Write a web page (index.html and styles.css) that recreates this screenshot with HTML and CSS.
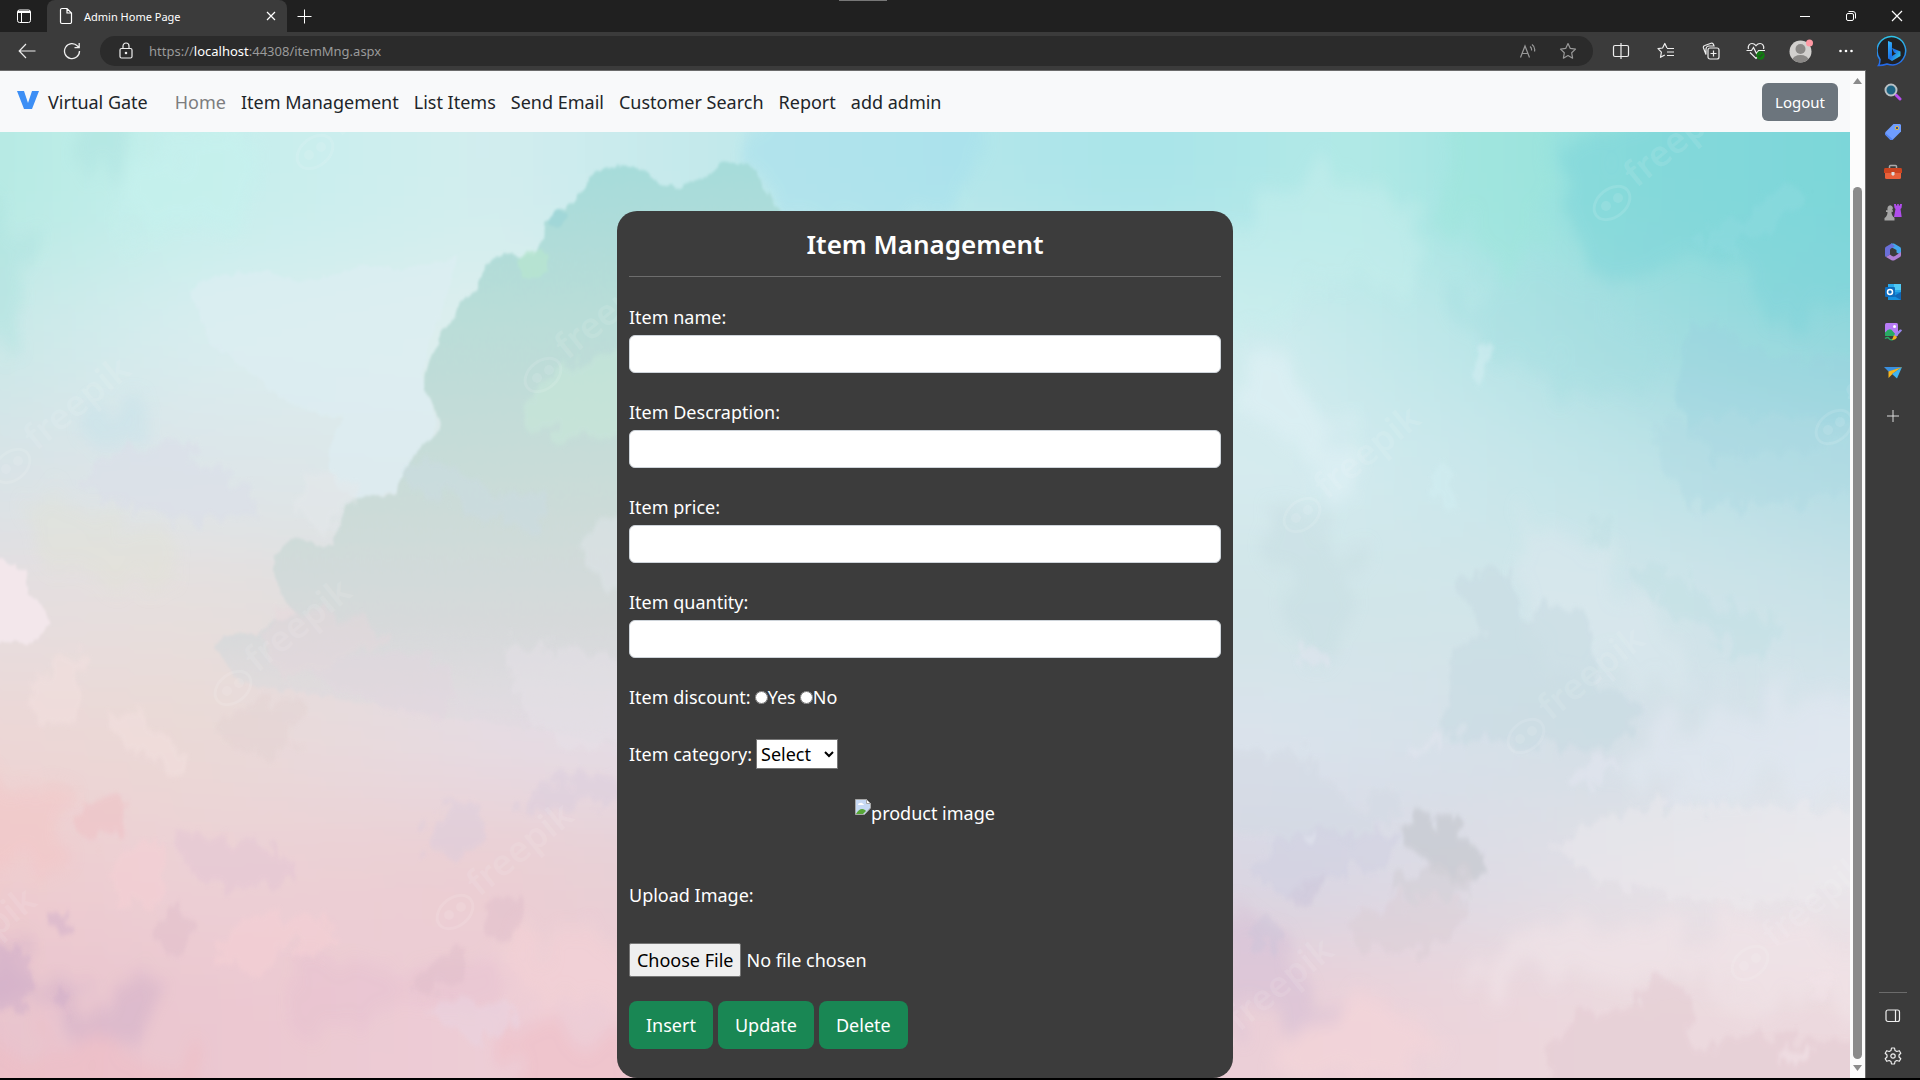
FILE: index.html
```html
<!DOCTYPE html>
<html lang="en">
<head>
<meta charset="utf-8">
<title>Admin Home Page</title>
<link rel="stylesheet" href="styles.css">
</head>
<body>
<div class="window">
  <header class="titlebar">
    <button class="icon-btn tab-actions" aria-label="Tab actions">
      <svg width="16" height="16" viewBox="0 0 16 16" fill="none" stroke="#fff"><rect x="1.500" y="2" width="13" height="12.500" rx="2"/><path d="M2 3.500h12M2 4.500h12M5.500 5v9"/></svg>
    </button>
    <div class="tab">
      <svg width="14" height="18" viewBox="0 0 14 18" fill="none" stroke="#fff" stroke-width="1.200"><path d="M3 1.500h5l4.500 4.500v9a1.500 1.500 0 0 1-1.500 1.500H3A1.500 1.500 0 0 1 1.500 15V3A1.500 1.500 0 0 1 3 1.500zM8 1.500V6h4.500"/></svg>
      <span class="tab-title">Admin Home Page</span>
      <button class="icon-btn" aria-label="Close tab"><svg width="10" height="10" viewBox="0 0 10 10" stroke="#fff" stroke-width="1.200"><path d="M1 1l8 8M9 1L1 9"/></svg></button>
    </div>
    <button class="icon-btn new-tab" aria-label="New tab"><svg width="15" height="15" viewBox="0 0 15 15" stroke="#fff"><path d="M7.500 0.500v14M0.500 7.500h14"/></svg></button>
    <span class="grip"></span>
    <div class="win-controls">
      <button class="icon-btn" aria-label="Minimize"><svg width="12" height="12" viewBox="0 0 12 12" stroke="#fff"><path d="M1 6.500h10"/></svg></button>
      <button class="icon-btn" aria-label="Restore"><svg width="12" height="12" viewBox="0 0 12 12" fill="none" stroke="#fff"><rect x="1.500" y="3.500" width="7" height="7" rx="1.500"/><path d="M3.500 1.500H8A2.500 2.500 0 0 1 10.500 4v4.500"/></svg></button>
      <button class="icon-btn" aria-label="Close"><svg width="12" height="12" viewBox="0 0 12 12" stroke="#fff" stroke-width="1.200"><path d="M1 1l10 10M11 1L1 11"/></svg></button>
    </div>
  </header>

  <div class="toolbar">
    <button class="icon-btn back" aria-label="Back"><svg width="18" height="16" viewBox="0 0 18 16" fill="none" stroke="#eee" stroke-width="1.200"><path d="M17.500 8H1.500M8 1L1.200 8 8 15"/></svg></button>
    <button class="icon-btn reload" aria-label="Refresh"><svg width="18" height="18" viewBox="0 0 18 18" fill="none" stroke="#eee" stroke-width="1.300"><path d="M16.500 9A7.500 7.500 0 1 1 14.500 4L16 5.500M16.200 1v4.700h-4.700"/></svg></button>
    <div class="address">
      <svg width="14" height="18" viewBox="0 0 14 18" fill="none" stroke="#eee" stroke-width="1.200"><rect x="1" y="6.500" width="12" height="9.500" rx="1.500"/><path d="M4 6.500V4a3 3 0 0 1 6 0v2.500"/><circle cx="7" cy="11" r=".7" fill="#eee"/></svg>
      <span class="url">https://<b>localhost</b>:44308/itemMng.aspx</span>
      <button class="icon-btn" aria-label="Read aloud"><svg width="18" height="16" viewBox="0 0 18 16" fill="none" stroke="#999" stroke-width="1.200"><path d="M1.500 14.500L6 3l4.500 11.500M3 10.500h6M11 3.500q2 1.500 1.500 4M13 1.500q3.500 2.500 2.500 7"/></svg></button>
      <button class="icon-btn" aria-label="Add to favorites"><svg width="18" height="18" viewBox="0 0 18 18" fill="none" stroke="#999" stroke-width="1.200" stroke-linejoin="round"><path d="M9 1.500l2.300 4.900 5.200.700-3.800 3.700.900 5.400L9 13.600l-4.600 2.600.900-5.400L1.500 7.100l5.200-.700z"/></svg></button>
    </div>
    <div class="tools">
      <button class="icon-btn" aria-label="Split screen"><svg width="18" height="16" viewBox="0 0 18 16" fill="none" stroke="#eee" stroke-width="1.200"><path d="M7 2.500H3A1.500 1.500 0 0 0 1.500 4v8A1.500 1.500 0 0 0 3 13.500h6M9 2.500h6A1.500 1.500 0 0 1 16.500 4v8a1.500 1.500 0 0 1-1.500 1.500H9M7 2.500h2M9 0v16"/></svg></button>
      <button class="icon-btn" aria-label="Favorites"><svg width="18" height="18" viewBox="0 0 18 18" fill="none" stroke="#eee" stroke-width="1.200" stroke-linejoin="round"><path d="M10 6L7.800 1.500 5.600 6 1 6.700l3.400 3.400-.900 5.200L7.800 13M10 6.500h7M10 10h7M10 13.500h7"/></svg></button>
      <button class="icon-btn" aria-label="Collections"><svg width="18" height="18" viewBox="0 0 18 18" fill="none" stroke="#eee" stroke-width="1.200"><rect x="6" y="6" width="11" height="11" rx="2"/><path d="M11.500 8.500v6M8.500 11.500h6M4 12.500L1.500 6A2 2 0 0 1 2.800 3.500L9 1.300a2 2 0 0 1 2.500 1.200l.500 1.500H7A3 3 0 0 0 4 7z"/></svg></button>
      <button class="icon-btn" aria-label="Browser essentials"><svg width="20" height="20" viewBox="0 0 20 20" fill="none" stroke="#eee" stroke-width="1.200"><path d="M2.500 8C1.500 5 3.500 2.500 6 2.500c2 0 3 1 4 2.200 1-1.200 2-2.200 4-2.200 2.500 0 4.500 2.500 3.500 5.500M4 11.500l6 6 2-2M0.500 9.500h5l2-3 3 6 2-3H19"/><circle cx="14.500" cy="14.500" r="4.200" fill="#107c10" stroke="none"/><path d="M12.500 14.500l1.500 1.500 2.700-3" stroke="#2b4a2b"/></svg></button>
      <button class="icon-btn" aria-label="Profile"><svg width="24" height="24" viewBox="0 0 24 24"><clipPath id="face"><circle cx="11.500" cy="12.500" r="11"/></clipPath><circle cx="11.500" cy="12.500" r="11" fill="#d2d0ce"/><g fill="#8a8886" clip-path="url(#face)"><circle cx="11.500" cy="10" r="5"/><ellipse cx="11.500" cy="21" rx="8" ry="5"/></g><circle cx="20.500" cy="4" r="3.500" fill="#ff99a4"/></svg></button>
      <button class="icon-btn" aria-label="Settings and more"><svg width="16" height="4" viewBox="0 0 16 4" fill="#fff"><circle cx="2.500" cy="2" r="1.300"/><circle cx="8" cy="2" r="1.300"/><circle cx="13.500" cy="2" r="1.300"/></svg></button>
      <button class="icon-btn chat" aria-label="Bing Chat"><svg width="32" height="32" viewBox="0 0 32 32"><defs><linearGradient id="ring" x2="0" y2="1"><stop stop-color="#2fc3e8"/><stop offset="1" stop-color="#2467e8"/></linearGradient><linearGradient id="bing" x2="1" y2="1"><stop stop-color="#37bdff"/><stop offset=".5" stop-color="#1a6fe8"/><stop offset="1" stop-color="#3ee0e0"/></linearGradient></defs><path d="M1.500 30.500q1.500-2 1.500-6A14.300 14.300 0 1 1 16 30q-3 0-6-1-4 1.500-8.500 1.500z" fill="#202124" stroke="url(#ring)" stroke-width="1.500"/><path d="M11 6l4 1.500v13.500l4-2.500-2-1-2-4.500 8.500 3.500v4.500L15 26l-4-2.500z" fill="url(#bing)"/></svg></button>
    </div>
  </div>

  <div class="content">
    <div class="page">
      <nav class="navbar">
        <a class="brand" href="#"><svg width="22" height="20" viewBox="0 0 22 20" fill="#3d8ff5"><path d="M0 1h7l4 12 4-12h7l-7 18H7z"/></svg>Virtual Gate</a>
        <a class="muted" href="#">Home</a>
        <a href="#">Item Management</a>
        <a href="#">List Items</a>
        <a href="#">Send Email</a>
        <a href="#">Customer Search</a>
        <a href="#">Report</a>
        <a href="#">add admin</a>
        <button class="logout">Logout</button>
      </nav>

      <main class="stage">
        <svg class="sky" viewBox="0 0 1850 946" preserveAspectRatio="none" aria-hidden="true">
          <defs>
            <filter id="wash" x="-20%" y="-20%" width="140%" height="140%"><feGaussianBlur stdDeviation="30 48"/></filter>
            <filter id="soft" x="-10%" y="-10%" width="120%" height="120%">
              <feTurbulence type="fractalNoise" baseFrequency=".022 .026" numOctaves="3" seed="4" result="n"/>
              <feDisplacementMap in="SourceGraphic" in2="n" scale="70" xChannelSelector="R" yChannelSelector="G"/>
              <feGaussianBlur stdDeviation="4"/>
            </filter>
            <filter id="puffy" x="-10%" y="-10%" width="120%" height="120%">
              <feTurbulence type="fractalNoise" baseFrequency=".05" numOctaves="2" seed="2" result="n"/>
              <feDisplacementMap in="SourceGraphic" in2="n" scale="16" xChannelSelector="R" yChannelSelector="G"/>
              <feGaussianBlur stdDeviation="3"/>
            </filter>
            <filter id="softer" x="-30%" y="-30%" width="160%" height="160%">
              <feTurbulence type="fractalNoise" baseFrequency=".010 .014" numOctaves="3" seed="7" result="n"/>
              <feDisplacementMap in="SourceGraphic" in2="n" scale="160" xChannelSelector="R" yChannelSelector="G"/>
              <feGaussianBlur stdDeviation="14"/>
            </filter>
            <linearGradient id="r0"><stop offset=".02" stop-color="#aee7df"/><stop offset=".16" stop-color="#c5efec"/><stop offset=".3" stop-color="#d2edef"/><stop offset=".42" stop-color="#c0e8ea"/><stop offset=".6" stop-color="#a9e4e9"/><stop offset=".7" stop-color="#b2e9e6"/><stop offset=".82" stop-color="#90dfdc"/><stop offset="1" stop-color="#74d5d8"/></linearGradient>
            <linearGradient id="r1"><stop offset="0" stop-color="#c0e5e3"/><stop offset=".16" stop-color="#d8edef"/><stop offset=".3" stop-color="#deefee"/><stop offset=".65" stop-color="#d0ecee"/><stop offset=".75" stop-color="#bbe6e8"/><stop offset=".85" stop-color="#9edbdf"/><stop offset="1" stop-color="#84d3da"/></linearGradient>
            <linearGradient id="r2"><stop offset="0" stop-color="#d5e1e5"/><stop offset=".16" stop-color="#dde5e9"/><stop offset=".3" stop-color="#dce8e9"/><stop offset=".67" stop-color="#d5ebef"/><stop offset=".82" stop-color="#c1e4e8"/><stop offset="1" stop-color="#a9d8e1"/></linearGradient>
            <linearGradient id="r3"><stop offset="0" stop-color="#e5dde1"/><stop offset=".16" stop-color="#e6dfdd"/><stop offset=".3" stop-color="#dcdde0"/><stop offset=".67" stop-color="#d0e5e8"/><stop offset=".82" stop-color="#d2e5ea"/><stop offset="1" stop-color="#c3dfe5"/></linearGradient>
            <linearGradient id="r4"><stop offset="0" stop-color="#eed5d5"/><stop offset=".16" stop-color="#ead9d6"/><stop offset=".3" stop-color="#e6dbe3"/><stop offset=".67" stop-color="#dae3ec"/><stop offset=".82" stop-color="#d3dfe6"/><stop offset="1" stop-color="#dfe7f0"/></linearGradient>
            <linearGradient id="r5"><stop offset="0" stop-color="#f0c9ca"/><stop offset=".16" stop-color="#ecd0d5"/><stop offset=".3" stop-color="#ebced2"/><stop offset=".67" stop-color="#d7d6e3"/><stop offset=".82" stop-color="#e2e0e6"/><stop offset="1" stop-color="#eeebee"/></linearGradient>
            <linearGradient id="r6"><stop offset="0" stop-color="#e6c2cd"/><stop offset=".16" stop-color="#ebc7d0"/><stop offset=".3" stop-color="#edcdd6"/><stop offset=".67" stop-color="#ebcfd7"/><stop offset=".82" stop-color="#ecd9de"/><stop offset="1" stop-color="#ebd8dd"/></linearGradient>
            <linearGradient id="cloud" x1="0" y1="0" x2="0" y2="1"><stop stop-color="#a6dcda"/><stop offset=".25" stop-color="#b9ddd8"/><stop offset=".5" stop-color="#c8dcd8"/><stop offset=".75" stop-color="#d6d9da"/><stop offset="1" stop-color="#dfdbe1" stop-opacity="0"/></linearGradient>
            <g id="mark" fill="#fff" fill-opacity=".1">
              <ellipse rx="20" ry="14" transform="rotate(-39)" fill="none" stroke="#fff" stroke-opacity=".11" stroke-width="3"/>
              <circle cx="-6" cy="3" r="5"/><circle cx="6" cy="-5" r="5"/>
              <text class="mark-text" x="28" y="4" transform="rotate(-39)">freepik</text>
            </g>
          </defs>
          <g filter="url(#wash)">
            <path fill="url(#r0)" d="M-150-200h2150v338h-2150z"/>
            <path fill="url(#r1)" d="M-150 135h2150v137h-2150z"/>
            <path fill="url(#r2)" d="M-150 270h2150v137h-2150z"/>
            <path fill="url(#r3)" d="M-150 405h2150v137h-2150z"/>
            <path fill="url(#r4)" d="M-150 540h2150v137h-2150z"/>
            <path fill="url(#r5)" d="M-150 675h2150v137h-2150z"/>
            <path fill="url(#r6)" d="M-150 810h2150v337h-2150z"/>
          </g>
          <g transform="translate(0 -2) scale(.408 .606)">
            <g filter="url(#softer)" opacity=".8">
              <path fill="#aee3e0" fill-opacity=".6" d="M-100 100q190 30 180 110t-10 140h-170zM200-50h130q-20 130-70 135t-60-40z"/>
              <path fill="#c5f1ee" fill-opacity=".8" d="M330 40q130-40 280-20 60 60-20 110-120 10-200 60t-90-70z"/>
              <path fill="#c7e3ea" fill-opacity=".7" d="M180 480q80-40 180 0 0 60-150 35z"/>
              <path fill="#e1e3d4" fill-opacity=".5" d="M60 580q100 30 200 50t180 80q40 60-100 50t-220-20z"/>
              <path fill="#f3c4c4" fill-opacity=".6" d="M-100 1060q220 10 260 70t-40 90-220-20z"/>
              <path fill="#c9a9c7" fill-opacity=".5" d="M-100 1340q180 10 210 60t190 10 60 60-180 20-280-30z"/>
              <path fill="#e2b7cc" fill-opacity=".3" d="M700 1430q60-80 300-60t260 50-200 40-360 10z"/>
              <path fill="#f1b9bf" fill-opacity=".5" d="M1250 1490q80-60 130 0t180-40v220h-300zM-100 1500q300 20 600 30v140h-600z"/>
              <path fill="#f5d2d6" fill-opacity=".7" d="M1180 1370q180-50 390-20v90q-200 30-390-70z"/>
              <path fill="#a3dfee" fill-opacity=".6" d="M1900-60h500q20 140-80 190t-330 20-90-210z"/>
            </g>
            <g filter="url(#puffy)">
              <path fill="#ddeef3" fill-opacity=".6" d="M465 270c50-40 130-30 195-37 90 30 160 5 225-12 80 15 150 5 235-10-20 70-60 110-85 190 10 60 50 70 30 100s-60 50-95 95c-50 12-80 8-110 8-60-20-80-70-15-130-60 0-150-20-205-60-60-30-90-50-130-60-10-45-30-65-45-84z"/>
              <path fill="url(#cloud)" d="M2000 300L1912 134c-30-30-48-45-57-66-25-16-75-18-95-8-20 25-60 20-106 39-34-14-54-14-64-27-20-12-80-17-110-7-20 5-30 10-40 20-15 20-25 30-45 38-20 10-60 15-60 37 5 20-15 25-27 45-30 5-50 10-73-5-40 10-38 30-57 45-8 24-20 20-43 35-20 10-15 28-28 38-20 8-30 15-30 32-35 30-45 60-32 90 25 20 50 46 25 65-30 10-50 20-70 50-15 20-30 30-30 45-30 10-70 0-100 5-40 18-35 75-68 85-30-2-52-25-95-10-45 20-45 50-12 90 10 20 30 27 40 27-40 10-92 15-100 36-30-4-80-8-110 20l60 60 1400 150z"/>
              <path fill="#b6e5cf" fill-opacity=".8" d="M1270 215q40-30 75-10l-5 30q-40 20-60 10z"/>
              <path fill="#95d2d8" fill-opacity=".5" d="M1340 150q20-25 50-15 0 20-25 28z"/>
              <path fill="#f3e7eb" d="M-40 700l100 25q10 15 5 40 40 15 57 45-20 30-45 40-35-15-117 12z"/>
            </g>
            <g filter="url(#soft)" opacity=".7">
              <path fill="#c9ecdb" fill-opacity=".6" d="M1310 430q60-60 360-70v150q-250 0-340-10t-20-70z"/>
              <path fill="#cbdce3" fill-opacity=".7" d="M980 580q50-60 100-40t110 50 140 0q20 50-10 70-90-10-150-30t-190-50z"/>
              <path fill="#e0e6ea" fill-opacity=".7" d="M1668 600q-190 20-250 90 40 70 250 100z"/>
              <path fill="#dadfe9" fill-opacity=".9" d="M200 575q180-100 300-30 100 30 130 80-100 40-230 15-150-30-200-65z"/>
              <path fill="#e5e8eb" fill-opacity=".8" d="M705 615q60-60 120-55l60 40q-60 20-70 65-50 0-110-50z"/>
              <path fill="#f2e0df" fill-opacity=".8" d="M60 955q20-30 45-60 40-40 115-32-20 25-20 60t-10 55q-50 10-130-23zM255 965q70-10 120 20 70 30 95 50-10 20-45 18-100-20-170-88z"/>
              <path fill="#e8d7dc" fill-opacity=".6" d="M640 830q60-50 110-40 160 10 210 60-130 20-230 60-60-10-90-80z"/>
              <path fill="#e3d5e0" fill-opacity=".6" d="M740 900q150-50 360-20 40 50-10 90-180-10-350-70zM1000 890q60-20 110 0-10 50-60 60-60-20-50-60z"/>
              <path fill="#e8e2ea" fill-opacity=".6" d="M1250 850q120-10 362 40v90q-130 40-160 45-120-20-180-70-10-60-22-105z"/>
              <path fill="#e2d0d0" fill-opacity=".5" d="M530 995q20-50 220-60-30 80-60 100-100-5-160-40z"/>
              <path fill="#d9cbdd" fill-opacity=".6" d="M1270 1110q80-60 280-35l-10 20q-170 35-270 35zM1040 1170q30-60 100-60t40 70q-60 30-140 10z"/>
              <path fill="#f0bfc3" fill-opacity=".7" d="M165 1130q60-40 150-20-10 50-70 70-60-20-80-50z"/>
              <path fill="#dfc0d3" fill-opacity=".5" d="M470 1215q40-50 135-30-10 40-70 45zM420 1160q150-10 250 30 80 20 40 50-120 30-240-10z"/>
              <path fill="#f5cfd5" fill-opacity=".8" d="M260 1240q40-80 150-60-20 60-30 110-60-10-120-50zM530 1360q20-60 80-65t150 5 70 35-90 10-80 30-130-15z"/>
              <path fill="#dfbecb" fill-opacity=".7" d="M1190 1300q20-40 60-40t30 45-60 25zM1010 1420q60-60 110-65t10 40-120 25zM380 1350q10-70 60-65t25 50-50 25z"/>
              <path fill="#d0aecb" fill-opacity=".7" d="M120 1435q20-15 55-5-5 25-30 23zM110 1300q30-15 65 0-20 25-50 22zM-60 1340q120-10 145 35-5 50-40 80-30 0-105-20z"/>
              <path fill="#ead3e0" fill-opacity=".8" d="M1030 1450q60-20 220-10l25 25q-30 40-130 30z"/>
            </g>
          </g>
          <g transform="translate(1220 -2) scale(.408 .606)">
            <g filter="url(#softer)" opacity=".75">
              <path fill="#9ee5db" fill-opacity=".7" d="M540-80h350q-90 120-100 210t-60 110-90-40-100-60z"/>
              <path fill="#c6eeec" fill-opacity=".7" d="M0 180q180-120 320-100t180 90-120 80-370 90z"/>
              <path fill="#79d3d9" fill-opacity=".6" d="M860 60q200-160 790-150v400q-300 0-350-60t-250-10-190-180z"/>
              <path fill="#a3dee0" fill-opacity=".5" d="M560 300q200-100 350-40t170 120-100 60-300-60z"/>
              <path fill="#dff1f5" fill-opacity=".9" d="M40 390q80-40 150 30t130 110 10 75-120-60-170-70z"/>
              <path fill="#c9dfe4" fill-opacity=".8" d="M110 620q100-30 180 60t10 160-130-20-60-200z"/>
              <path fill="#dce8ee" fill-opacity=".7" d="M700 640q150 20 300 110t200 130-200 30-250-130-50-140z"/>
              <path fill="#e2e8f1" fill-opacity=".8" d="M900 1050q200-60 360-90t390-50v170q-400 20-750-30z"/>
              <path fill="#f1e5e9" fill-opacity=".8" d="M620 1380q150-60 400-70t620 30v80q-300 40-500-10t-500 40z"/>
              <path fill="#f4d5d9" fill-opacity=".9" d="M160 1480q100-60 250-30t130 70-160 40-240 20z"/>
              <path fill="#d4bed6" fill-opacity=".7" d="M30 1300q90-10 150 60t90 90-120 20-130-20z"/>
            </g>
            <g filter="url(#soft)" opacity=".65">
              <path fill="#c6dae1" fill-opacity=".8" d="M580 740q70-20 130-15 20 60 50 90 60-50 130-20 40 60 20 110 80 20 130 50-40 60-110 70-200-10-380-30 10-80 20-130 40-30 90-35-70-30-80-90z"/>
              <path fill="#d1d8e3" fill-opacity=".7" d="M-40 1040q200-40 290 10 50 60 100 80 60-60 80-10-30 40-80 50-120 10-400-20z"/>
              <path fill="#c4c7ce" d="M440 1150q60-30 130-5 80 40 85 85-70 20-150-15-50-40-65-65z"/>
              <path fill="#cfcad0" fill-opacity=".7" d="M410 1265q60-60 180-50 50 20 20 45-80 20-200 5z"/>
              <path fill="#d0cfe1" fill-opacity=".8" d="M75 1220q60-60 140-65t240 20q-40 50-180 50-20 40-100 40-60-10-100-45z"/>
              <path fill="#ccc4d8" fill-opacity=".7" d="M160 1265q30-30 85-25-10 40-50 48zM60 1320q40-25 95-5-5 40-50 45-40-10-45-40z"/>
              <path fill="#dacdd4" fill-opacity=".7" d="M310 1310q80-50 280-40 30 20-20 50-120 60-220 30z"/>
              <path fill="#e2e6f0" fill-opacity=".9" d="M185 860q50-20 90 15-20 15-50 10zM460 1035q40-35 85-35-20 30-85 35zM850 1065q60-40 130-20-50 30-110 45-25 5-20-25zM200 1165q30-10 45 5-15 20-30 15z"/>
              <path fill="#d0edf1" d="M615 390q10-30 38-25 5 40-25 60-25-10-13-35zM520 570q30-20 50 0-5 30 5 50-30 10-55-50z"/>
              <path fill="#8edce0" fill-opacity=".7" d="M1170 195q60-60 130-50 60-80 150-50-60 60-160 90-60 20-120 10z"/>
              <path fill="#9bd2df" fill-opacity=".6" d="M1130 370q20-60 100-50 80 80 430 50v110q-270 70-440 60-120-60-90-170z"/>
              <path fill="#add9e3" fill-opacity=".6" d="M1070 500q60-40 590-20v100q-320 60-520 30-60-40-70-110z"/>
              <path fill="#c1dfe4" fill-opacity=".7" d="M900 660q50-30 65 0 0 40-50 35zM1000 720q120 0 200 50 100 40 180 40-30 60-100 60-80-40-160-70t-120-80z"/>
              <path fill="#f0edf0" fill-opacity=".6" d="M820 1180q100-50 240-60 250-20 600 20v110q-420 50-620 0-120 0-220-70z"/>
              <path fill="#e3c9d0" fill-opacity=".7" d="M1010 1440q40-40 130-30 20 60 10 90 80 20 140-10l370 20v160H800v-150q60-70 210-80z"/>
              <path fill="#f2e4e9" fill-opacity=".8" d="M1440 1410q30-30 65-5-10 25-40 23zM1370 1530q30-20 70-10-20 25-60 22z"/>
            </g>
          </g>
          <use href="#mark" x="12" y="334"/><use href="#mark" x="233" y="556"/><use href="#mark" x="455" y="780"/><use href="#mark" x="543" y="243"/><use href="#mark" x="315" y="20"/><use href="#mark" x="-82" y="865"/>
          <use href="#mark" x="1612" y="71"/><use href="#mark" x="1302" y="383"/><use href="#mark" x="1526" y="604"/><use href="#mark" x="1750" y="831"/><use href="#mark" x="1834" y="295"/><use href="#mark" x="1215" y="915"/>
        </svg>

        <form class="card">
          <h1>Item Management</h1>
          <div class="field"><label for="name">Item name:</label><input id="name" type="text"></div>
          <div class="field"><label for="desc">Item Descraption:</label><input id="desc" type="text"></div>
          <div class="field"><label for="price">Item price:</label><input id="price" type="text"></div>
          <div class="field"><label for="qty">Item quantity:</label><input id="qty" type="text"></div>
          <div class="row discount"><span>Item discount:</span>
            <label><input type="radio" name="discount">Yes</label>
            <label><input type="radio" name="discount">No</label>
          </div>
          <div class="row category"><label for="cat">Item category:</label>
            <select id="cat"><option>Select</option></select>
          </div>
          <div class="preview">
            <svg width="16" height="16" viewBox="0 0 16 16"><path d="M.5.500h11l4 4V9l-6 6.500h-9z" fill="#c6d9f5" stroke="#a7a7a7"/><path d="M11.500.500v4h4z" fill="#fff" stroke="#a7a7a7"/><path d="M3 6q0-2 2-2 2-1 3 1 1 0 1 1z" fill="#fff"/><path d="M1 15q4-7 9-4l1 1-3 3z" fill="#58a637"/></svg>
            <span>product image</span>
          </div>
          <label class="upload-label" for="upload">Upload Image:</label>
          <input class="upload" id="upload" type="file">
          <div class="actions">
            <button type="button">Insert</button>
            <button type="button">Update</button>
            <button type="button">Delete</button>
          </div>
        </form>
      </main>
    </div>

    <div class="scrollbar">
      <svg width="9" height="6" viewBox="0 0 9 6" fill="#8b8b8b"><path d="M0 6l4.500-6L9 6z"/></svg>
      <span class="thumb"></span>
      <svg width="9" height="6" viewBox="0 0 9 6" fill="#8b8b8b"><path d="M0 0l4.500 6L9 0z"/></svg>
    </div>

    <aside class="sidebar">
      <button class="icon-btn" aria-label="Search"><svg width="18" height="18" viewBox="0 0 18 18"><path d="M12 12l4 4" stroke="#b84df0" stroke-width="3" stroke-linecap="round"/><circle cx="7" cy="7" r="5.500" fill="#1e6483" stroke="#b9c0c4" stroke-width="2"/></svg></button>
      <button class="icon-btn" aria-label="Shopping"><svg width="18" height="18" viewBox="0 0 18 18"><path d="M9.500 1H16l1 1v6.500L9 16.500q-1.500 1-3 0L1.500 12q-1-1.500 0-3z" fill="#6f9dff"/><path d="M9 16.500q-1.500 1-3 0L1.500 12q-.7-1 0-2z" fill="#5484f0"/><circle cx="13" cy="5" r="1.700" fill="#33509c" stroke="#e8bd3b"/></svg></button>
      <button class="icon-btn" aria-label="Tools"><svg width="18" height="16" viewBox="0 0 18 16"><path d="M5.500 5V2.500q0-1 1-1h5q1 0 1 1V5" fill="none" stroke="#aaa" stroke-width="1.500"/><rect x="1" y="4" width="16" height="11" rx="1.500" fill="#e8603a"/><path d="M1 4h16q1 0 1 2v3H0V6q0-2 1-2z" fill="#cb4420"/><path d="M7.500 8h3v2.500L9 12l-1.500-1.500z" fill="#ddd"/></svg></button>
      <button class="icon-btn" aria-label="Games"><svg width="18" height="18" viewBox="0 0 18 18"><path d="M10 1h2v1.500h1.200V1h1.600v1.500H16V1h2l-.500 4-1 1 1.200 8H10l1.500-8-1-1z" fill="#b04dec"/><path d="M3.500 5a2.700 2.700 0 1 1 4.200 2.300H9v1.500H7.500q0 4 3 6V17.500H.5V15q3-2 3-6H2V7.300h1.700A3 3 0 0 1 3.500 5z" fill="#a6a6a6"/></svg></button>
      <button class="icon-btn" aria-label="Microsoft 365"><svg width="18" height="18" viewBox="0 0 18 18"><path d="M7 .5h3l6 3.500q1 .7 1 2v6l-4.500-2.500V7L7 4z" fill="#42a7ec"/><path d="M7.500.500L2 3.700Q1 4.300 1 5.500v7q0 1 1 1.500l4-2.500V7q0-1 1-1.500l4-2.300z" fill="#6a6fd8"/><path d="M2 14l5.500 3.200q1.500.8 3 0L16 14q1-.7 1-2V9l-6 4q-1.500.8-3 0l-2-1.500z" fill="#b07fd6"/></svg></button>
      <button class="icon-btn" aria-label="Outlook"><svg width="18" height="18" viewBox="0 0 18 18"><rect x="4" y="1" width="13" height="10" fill="#28a8ea"/><path d="M10 1h7v6h-7z" fill="#50c9f5"/><path d="M4 9h13v8H4z" fill="#1490df"/><path d="M17 9v8l-7-4z" fill="#1066b5"/><rect x="1" y="4" width="10" height="10" rx="1" fill="#0f6cbd"/><circle cx="6" cy="9" r="2.500" fill="none" stroke="#fff" stroke-width="1.500"/></svg></button>
      <button class="icon-btn" aria-label="Image Creator"><svg width="18" height="18" viewBox="0 0 18 18"><rect x="1" y="0" width="13" height="13" rx="1.500" fill="#b77bf6"/><circle cx="10.500" cy="3.500" r="1.500" fill="#fff"/><path d="M1 9.500q5-6 8-1l4 4.500H1z" fill="#28aa64"/><path d="M1 15.500q3-2 4 0t4 1" fill="none" stroke="#28aa64" stroke-width="1.500"/><path d="M10 12l6-5.500q1.500-.5 2 1L12 14z" fill="#9a86ee"/><path d="M8 17l2-5 3 2q-1 3-5 3z" fill="#f3b41e"/></svg></button>
      <button class="icon-btn" aria-label="Drop"><svg width="18" height="16" viewBox="0 0 18 16"><path d="M0 3h18L5 8z" fill="#3a90df"/><path d="M18 3L4.500 7.500V14L9 9.500z" fill="#f6b51e"/><path d="M18 3L8 10l5 4.500z" fill="#3fb4f1"/></svg></button>
      <button class="icon-btn customize" aria-label="Customize"><svg width="12" height="12" viewBox="0 0 12 12" stroke="#ddd"><path d="M6 0v12M0 6h12"/></svg></button>
      <hr>
      <button class="icon-btn" aria-label="Hide sidebar"><svg width="16" height="14" viewBox="0 0 16 14" fill="none" stroke="#eee" stroke-width="1.200"><rect x="1" y="1" width="13.500" height="11.500" rx="2"/><path d="M10.500 1v11.500"/></svg></button>
      <button class="icon-btn" aria-label="Settings"><svg width="18" height="18" viewBox="0 0 18 18" fill="none" stroke="#eee" stroke-width="1.200" stroke-linejoin="round"><circle cx="9" cy="9" r="2.200"/><path d="M7.500 1h3l.500 2.500 1.800 1 2.500-.800 1.500 2.600L15 8v2l1.800 1.700-1.500 2.600-2.500-.800-1.800 1-.500 2.500h-3L7 14.500l-1.800-1-2.500.800-1.500-2.600L3 10V8L1.200 6.300l1.500-2.600 2.500.800 1.800-1z"/></svg></button>
    </aside>
  </div>
</div>
</body>
</html>
```
FILE: styles.css
```css
* { box-sizing: border-box; }

body {
  margin: 0;
  background: #000;
  font-family: "Noto Sans", "Open Sans", sans-serif;
  font-size: 18px;
  color: #212529;
}

button, input, select { font: inherit; }

.window {
  display: flex;
  flex-direction: column;
  height: 100vh;
  padding-bottom: 2px;
  overflow: hidden;
}

.icon-btn {
  display: flex;
  flex: none;
  align-items: center;
  justify-content: center;
  padding: 0;
  border: 0;
  background: none;
}

/* Browser chrome */
.titlebar {
  display: flex;
  flex: none;
  height: 32px;
  background: #202020;
}
.tab-actions { width: 47px; }
.tab {
  display: flex;
  align-items: center;
  gap: 11px;
  width: 240px;
  padding: 0 11px 0 12px;
  border-radius: 8px 8px 0 0;
  background: #3b3b3b;
  color: #fff;
  font-size: 11px;
}
.tab-title { flex: 1; white-space: nowrap; }
.new-tab { width: 34px; }
.grip {
  width: 48px;
  height: 1px;
  margin-left: 27%;
  background: #777;
}
.win-controls { display: flex; margin-left: auto; }
.win-controls .icon-btn { width: 46px; }

.toolbar {
  display: flex;
  flex: none;
  height: 38px;
  padding: 4px 5px;
  background: #3b3b3b;
}
.back { width: 44px; }
.reload { width: 46px; margin-right: 5px; }
.address {
  display: flex;
  flex: 1;
  align-items: center;
  padding: 0 5px 0 19px;
  border-radius: 15px;
  background: #2b2b2b;
  color: #9a9a9a;
  font-size: 13px;
}
.address .icon-btn { width: 40px; }
.url { flex: 1; padding-left: 16px; white-space: nowrap; }
.url b { color: #fff; font-weight: 400; }
.tools { display: flex; margin-left: 5px; }
.tools .icon-btn { width: 45px; }
.tools .chat { margin-left: 2px; }

.content { display: flex; flex: 1; min-height: 0; }

/* Web page */
.page {
  display: flex;
  flex: 1;
  flex-direction: column;
  min-width: 0;
  border-top: 1px solid #6b6b6b;
}
.navbar {
  display: flex;
  flex: none;
  align-items: center;
  gap: 15px;
  height: 61px;
  padding: 0 12px 0 17px;
  background: #f8f9fa;
}
.navbar a {
  color: #212529;
  text-decoration: none;
  white-space: nowrap;
}
.navbar .muted { color: #7c7d7e; }
.navbar .brand {
  display: flex;
  gap: 9px;
  margin-right: 12px;
}
.logout {
  height: 38px;
  margin-left: auto;
  padding: 0 13px;
  border: 0;
  border-radius: 6px;
  background: #6c757d;
  color: #fff;
  font-size: 15px;
}

.stage {
  position: relative;
  display: flex;
  flex: 1;
  flex-direction: column;
  align-items: center;
  min-height: 0;
  padding-top: 79px;
  overflow: hidden;
}
.sky {
  position: absolute;
  inset: 0;
  width: 100%;
  height: 100%;
}
.mark-text {
  font-size: 36px;
  font-weight: 600;
}

.card {
  position: relative;
  display: flex;
  flex: 1;
  flex-direction: column;
  width: 33.3%;
  padding: 12px;
  border-radius: 20px;
  background: #3c3c3c;
  color: #fff;
  line-height: 28px;
}
.card h1 {
  margin: 0 0 26px;
  padding-bottom: 11px;
  border-bottom: 1px solid #6d6d6d;
  font-size: 26px;
  font-weight: 600;
  line-height: 42px;
  text-align: center;
}
.field {
  display: flex;
  flex-direction: column;
  gap: 4px;
  margin-bottom: 25px;
}
.field input {
  height: 38px;
  padding: 6px 12px;
  border: 1px solid #ced4da;
  border-radius: 6px;
  background: #fff;
}
.row {
  display: flex;
  align-items: center;
  gap: 4px;
}
.discount { height: 28px; }
.discount label { display: flex; align-items: center; }
.discount input {
  width: 13px;
  height: 13px;
  margin: 0;
}
.category { height: 30px; margin-top: 28px; }
.category select {
  width: 82px;
  height: 30px;
  padding: 0;
  border: 1px solid #767676;
  border-radius: 0;
  background: #fff;
  color: #000;
}
.preview {
  display: flex;
  justify-content: center;
  margin-top: 30px;
}
.upload-label { margin-top: 54px; }
.upload { margin-top: 34px; }
.upload::file-selector-button {
  height: 34px;
  margin-right: 5px;
  padding: 0 7px;
  border: 1px solid #767676;
  border-radius: 2px;
  background: #efefef;
  color: #000;
  font: inherit;
}
.actions {
  display: flex;
  gap: 5px;
  margin-top: 24px;
}
.actions button {
  height: 48px;
  padding: 0 17px;
  border: 0;
  border-radius: 8px;
  background: #198754;
  color: #fff;
}

.scrollbar {
  display: flex;
  flex: none;
  flex-direction: column;
  align-items: center;
  width: 16px;
  padding: 7px 1px 7px 0;
  border-top: 1px solid #6b6b6b;
  border-right: 1px solid #6b6b6b;
  background: #fcfcfc;
}
.thumb {
  flex: 1;
  width: 9px;
  margin: 103px 0 6px;
  border-radius: 5px;
  background: #8b8b8b;
}

.sidebar {
  display: flex;
  flex: none;
  flex-direction: column;
  align-items: center;
  width: 54px;
  padding: 2px 0;
  background: #3b3b3b;
}
.sidebar .icon-btn { width: 40px; height: 40px; }
.sidebar .customize { margin-top: 4px; }
.sidebar hr {
  width: 28px;
  height: 1px;
  margin: auto 0 3px;
  border: 0;
  background: #6b6b6b;
}
```
